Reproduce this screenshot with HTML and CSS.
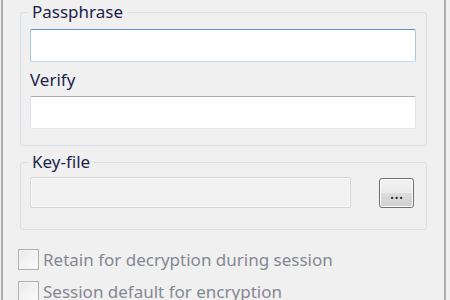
FILE: index.html
```html
<!DOCTYPE html>
<html lang="en">
<head>
  <meta charset="UTF-8">
  <title>Passphrase</title>
  <link rel="stylesheet" href="styles.css">
</head>
<body>

<div class="window">

  <!-- Passphrase group -->
  <fieldset class="group">
    <legend>Passphrase</legend>
    <input type="password" class="field focused" id="pass">
    <label class="label" for="verify">Verify</label>
    <input type="password" class="field" id="verify">
  </fieldset>

  <!-- Key-file group -->
  <fieldset class="group keyfile">
    <legend>Key-file</legend>
    <div class="file-row">
      <input type="text" class="field disabled" disabled>
      <button class="browse">...</button>
    </div>
  </fieldset>

  <div class="check-row">
    <span class="box"></span>
    <span class="check-text">Retain for decryption during session</span>
  </div>
  <div class="check-row">
    <span class="box"></span>
    <span class="check-text">Session default for encryption</span>
  </div>

</div>

</body>
</html>
```

FILE: styles.css
```css
body {
  margin: 0;
  background: #f0f0f0;
  font-family: 'Noto Sans', sans-serif;
  font-size: 17px;
  color: #1c1f4a;
  height: 300px;
  overflow: hidden;
}

.window {
  margin-left: 1px;
  width: 445px;
  height: 300px;
  box-sizing: border-box;
  border-left: 2px solid #acacac;
  border-right: 2px solid #acacac;
  padding-top: 2px;
}

.group {
  margin: 0 0 0 17px;
  width: 407px;
  box-sizing: border-box;
  padding: 0 10px 16px 9px;
  border: 1px solid #d5dfe5;
  border-radius: 3px;
  min-width: 0;
}

.group legend {
  margin-left: -2px;
  padding: 0 4px;
  line-height: 20px;
  height: 20px;
}

.field {
  display: block;
  width: 100%;
  height: 33px;
  box-sizing: border-box;
  margin: 7px 0 0 0;
  padding: 0 4px;
  background: #fff;
  border: 1px solid;
  border-color: #abadb3 #e2e3ea #e3e9ef #e2e3ea;
  border-radius: 2px;
  outline: none;
  font: inherit;
}

.field.focused {
  border-color: #5b92c7 #a6c7e6 #c6dcef #a6c7e6;
}

.label {
  display: block;
  margin-top: 8px;
  line-height: 20px;
  height: 20px;
}

.label + .field {
  margin-top: 6px;
}

.keyfile {
  margin-top: 6px;
  padding-bottom: 21px;
}

.file-row {
  display: flex;
  align-items: center;
  margin-top: 5px;
}

.field.disabled {
  width: 321px;
  height: 31px;
  margin: 0;
  background: #f2f2f2;
  border-color: #d6d6d6;
  box-shadow: inset 0 0 0 1px #fafafa;
}

.browse {
  margin: 0 2px 0 auto;
  width: 35px;
  height: 30px;
  padding: 0;
  border: 1px solid #707070;
  border-radius: 3px;
  background: linear-gradient(#f2f2f2 0%, #ebebeb 50%, #dddddd 50%, #cfcfcf 100%);
  box-shadow: inset 0 0 0 1px #fcfcfc;
  font: inherit;
  color: #1c1f4a;
  line-height: 28px;
}

.check-row {
  display: flex;
  align-items: center;
  margin-left: 15px;
  height: 21px;
  margin-top: 11px;
}

.check-row:first-of-type {
  margin-top: 19px;
}

.box {
  width: 21px;
  height: 21px;
  box-sizing: border-box;
  border: 1px solid #b1b1b1;
  background: linear-gradient(135deg, #eaeaea, #fbfbfb);
  box-shadow: inset 0 0 0 1px #f4f4f4;
}

.check-text {
  margin-left: 4px;
  color: #858793;
  line-height: 21px;
}
```
